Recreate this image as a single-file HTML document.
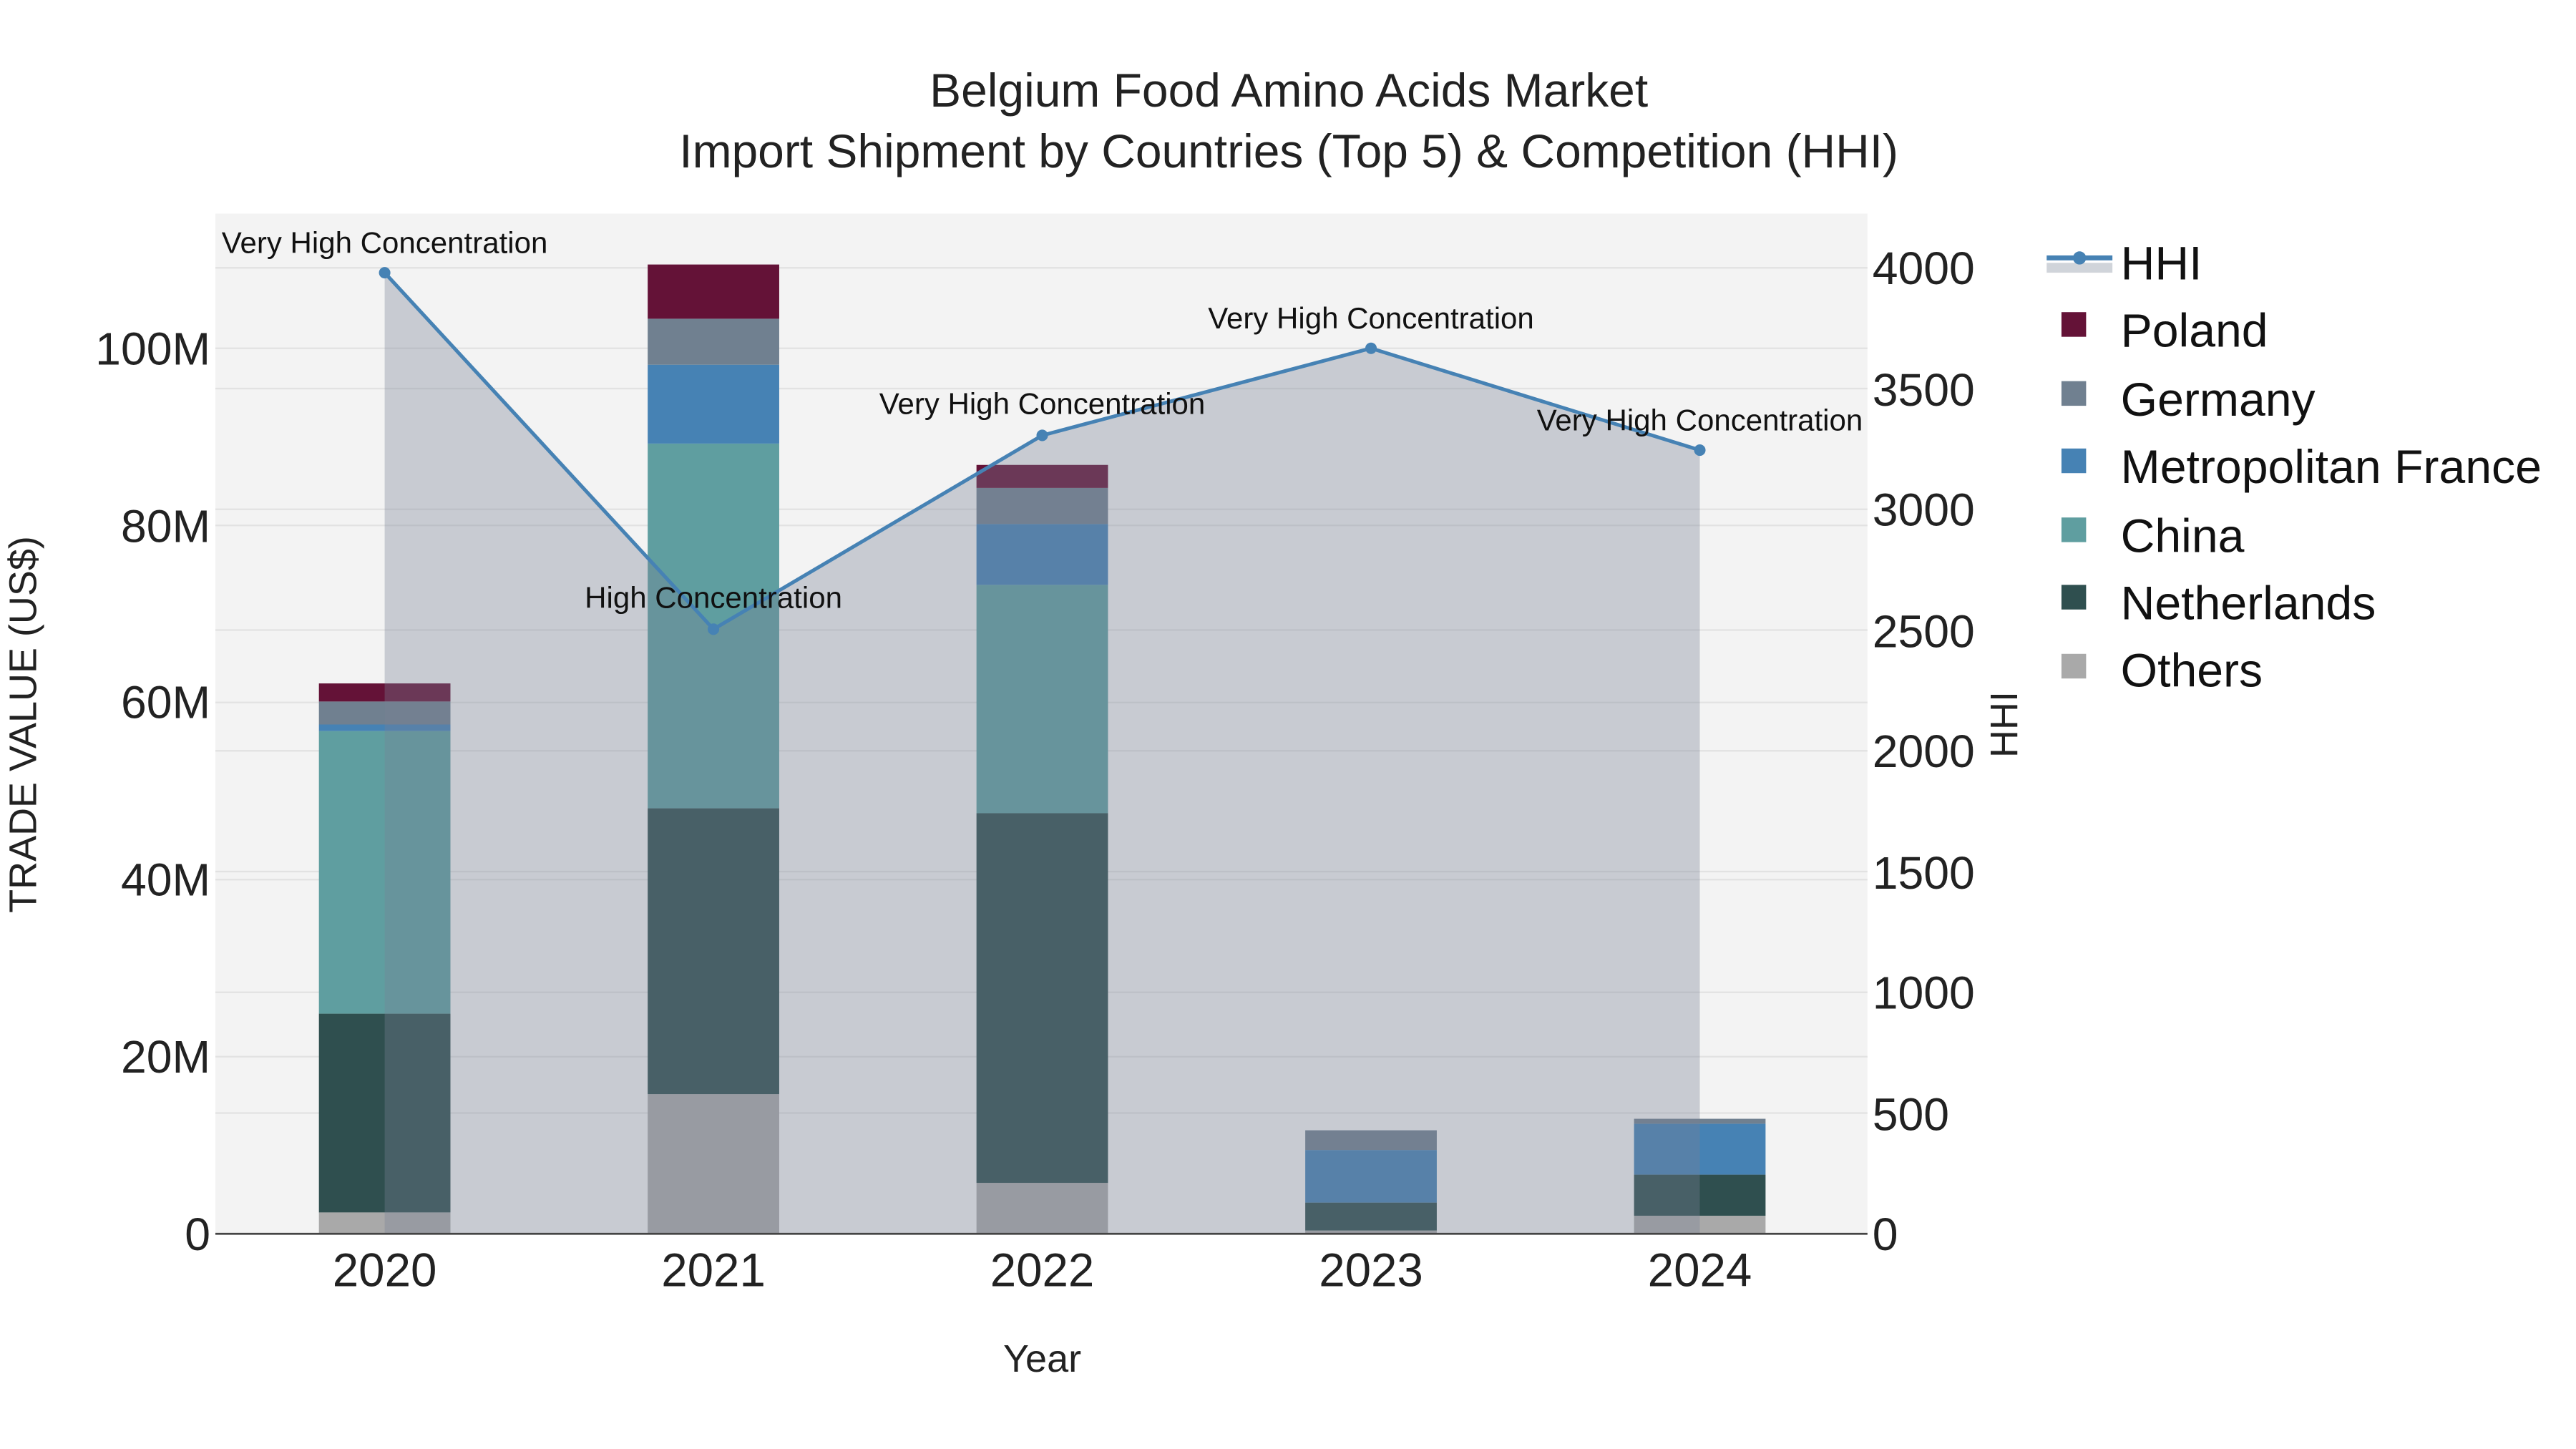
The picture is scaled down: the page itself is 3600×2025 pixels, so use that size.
<!DOCTYPE html>
<html><head><meta charset="utf-8"><style>html,body{margin:0;padding:0;background:#fff}svg{display:block}</style></head>
<body>
<svg width="3600" height="2025" viewBox="0 0 1567 882" preserveAspectRatio="none" xmlns="http://www.w3.org/2000/svg" font-family="Liberation Sans, Arial, sans-serif">
<rect x="0" y="0" width="1567" height="882" fill="#fff"/>
<rect x="131" y="130" width="1005" height="621" fill="#f3f3f3"/>
<g stroke="#e2e2e2" stroke-width="1">
<line x1="131" x2="1136" y1="643.2" y2="643.2"/><line x1="131" x2="1136" y1="535.4" y2="535.4"/><line x1="131" x2="1136" y1="427.6" y2="427.6"/><line x1="131" x2="1136" y1="319.8" y2="319.8"/><line x1="131" x2="1136" y1="212" y2="212"/>
<line x1="131" x2="1136" y1="677.5" y2="677.5"/><line x1="131" x2="1136" y1="604" y2="604"/><line x1="131" x2="1136" y1="530.5" y2="530.5"/><line x1="131" x2="1136" y1="457" y2="457"/><line x1="131" x2="1136" y1="383.5" y2="383.5"/><line x1="131" x2="1136" y1="310" y2="310"/><line x1="131" x2="1136" y1="236.5" y2="236.5"/><line x1="131" x2="1136" y1="163" y2="163"/>
</g>
<g>
<rect x="194" y="738" width="80" height="13" fill="#a9a9a9"/>
<rect x="194" y="617" width="80" height="121" fill="#2f4f4f"/>
<rect x="194" y="445" width="80" height="172" fill="#5f9ea0"/>
<rect x="194" y="441" width="80" height="4" fill="#4682b4"/>
<rect x="194" y="427" width="80" height="14" fill="#708090"/>
<rect x="194" y="416" width="80" height="11" fill="#641237"/>

<rect x="394" y="666" width="80" height="85" fill="#a9a9a9"/>
<rect x="394" y="492" width="80" height="174" fill="#2f4f4f"/>
<rect x="394" y="270" width="80" height="222" fill="#5f9ea0"/>
<rect x="394" y="222" width="80" height="48" fill="#4682b4"/>
<rect x="394" y="194" width="80" height="28" fill="#708090"/>
<rect x="394" y="161" width="80" height="33" fill="#641237"/>

<rect x="594" y="720" width="80" height="31" fill="#a9a9a9"/>
<rect x="594" y="495" width="80" height="225" fill="#2f4f4f"/>
<rect x="594" y="356" width="80" height="139" fill="#5f9ea0"/>
<rect x="594" y="319" width="80" height="37" fill="#4682b4"/>
<rect x="594" y="297" width="80" height="22" fill="#708090"/>
<rect x="594" y="283" width="80" height="14" fill="#641237"/>

<rect x="794" y="749" width="80" height="2" fill="#a9a9a9"/>
<rect x="794" y="732" width="80" height="17" fill="#2f4f4f"/>
<rect x="794" y="700" width="80" height="32" fill="#4682b4"/>
<rect x="794" y="688" width="80" height="12" fill="#708090"/>

<rect x="994" y="740" width="80" height="11" fill="#a9a9a9"/>
<rect x="994" y="715" width="80" height="25" fill="#2f4f4f"/>
<rect x="994" y="684" width="80" height="31" fill="#4682b4"/>
<rect x="994" y="681" width="80" height="3" fill="#708090"/>
</g>
<polygon points="234,751 234,166 434,383 634,265 834,212 1034,274 1034,751" fill="rgb(120,130,150)" fill-opacity="0.35"/>
<polyline points="234,166 434,383 634,265 834,212 1034,274" fill="none" stroke="#4682b4" stroke-width="2.2"/>
<g fill="#4682b4"><circle cx="234" cy="166" r="3.5"/><circle cx="434" cy="383" r="3.5"/><circle cx="634" cy="265" r="3.5"/><circle cx="834" cy="212" r="3.5"/><circle cx="1034" cy="274" r="3.5"/></g>
<line x1="131" x2="1136" y1="751" y2="751" stroke="#444" stroke-width="1.2"/>
<g font-size="18.3" fill="#111" text-anchor="middle">
<text x="234" y="154">Very High Concentration</text>
<text x="434" y="370">High Concentration</text>
<text x="634" y="252">Very High Concentration</text>
<text x="834" y="200">Very High Concentration</text>
<text x="1034" y="262">Very High Concentration</text>
</g>
<g font-size="28.7" fill="#222" text-anchor="middle">
<text x="784" y="65">Belgium Food Amino Acids Market</text>
<text x="784" y="102">Import Shipment by Countries (Top 5) &amp; Competition (HHI)</text>
</g>
<g font-size="28" fill="#222" text-anchor="end">
<text x="128" y="761">0</text>
<text x="128" y="653">20M</text>
<text x="128" y="545">40M</text>
<text x="128" y="437">60M</text>
<text x="128" y="330">80M</text>
<text x="128" y="222">100M</text>
</g>
<g font-size="28" fill="#222" text-anchor="start">
<text x="1139" y="761">0</text>
<text x="1139" y="688">500</text>
<text x="1139" y="614">1000</text>
<text x="1139" y="541">1500</text>
<text x="1139" y="467">2000</text>
<text x="1139" y="394">2500</text>
<text x="1139" y="320">3000</text>
<text x="1139" y="247">3500</text>
<text x="1139" y="173">4000</text>
</g>
<g font-size="28.5" fill="#222" text-anchor="middle">
<text x="234" y="783">2020</text><text x="434" y="783">2021</text><text x="634" y="783">2022</text><text x="834" y="783">2023</text><text x="1034" y="783">2024</text>
</g>
<text x="634" y="835" font-size="23.5" fill="#222" text-anchor="middle">Year</text>
<text transform="translate(22,441) rotate(-90)" font-size="23.5" fill="#222" text-anchor="middle">TRADE VALUE (US$)</text>
<text transform="translate(1227,441) rotate(-90)" font-size="23.5" fill="#222" text-anchor="middle">HHI</text>
<rect x="1245" y="160" width="40" height="6" fill="#d0d4da"/>
<line x1="1245" x2="1285" y1="157" y2="157" stroke="#4682b4" stroke-width="3"/>
<circle cx="1265" cy="157" r="4" fill="#4682b4"/>
<g>
<rect x="1254" y="190" width="15" height="15" fill="#641237"/>
<rect x="1254" y="232" width="15" height="15" fill="#708090"/>
<rect x="1254" y="273" width="15" height="15" fill="#4682b4"/>
<rect x="1254" y="315" width="15" height="15" fill="#5f9ea0"/>
<rect x="1254" y="356" width="15" height="15" fill="#2f4f4f"/>
<rect x="1254" y="398" width="15" height="15" fill="#a9a9a9"/>
</g>
<g font-size="28.8" fill="#111">
<text x="1290" y="170">HHI</text>
<text x="1290" y="211">Poland</text>
<text x="1290" y="253">Germany</text>
<text x="1290" y="294">Metropolitan France</text>
<text x="1290" y="336">China</text>
<text x="1290" y="377">Netherlands</text>
<text x="1290" y="418">Others</text>
</g>
</svg>
</body></html>
